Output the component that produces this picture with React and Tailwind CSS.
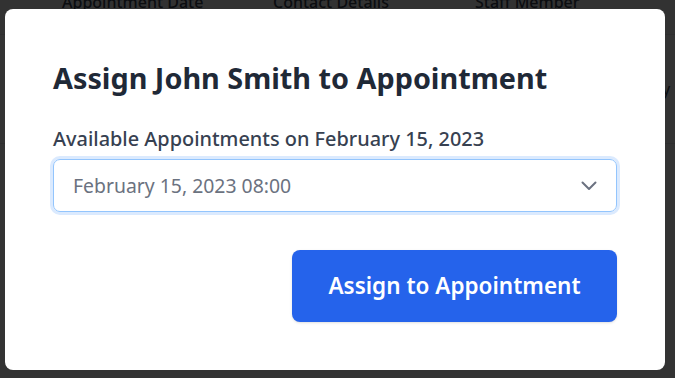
import React from "react";

export default function App() {
  const font = { fontFamily: '"Noto Sans", "Open Sans", sans-serif' };
  return (
    <div className="relative w-[675px] h-[378px] overflow-hidden bg-white" style={font}>
      {/* background table */}
      <div className="-mt-[14px]">
        <div className="flex h-[49px] items-center pb-[16px] bg-gray-50 border-b border-gray-200 text-[16px] text-[#374151] font-medium">
          <div className="w-[62px]" />
          <div className="w-[211px]">Appointment Date</div>
          <div className="w-[202px]">Contact Details</div>
          <div>Staff Member</div>
        </div>
        <div className="flex h-[109px] items-center border-b border-gray-200 text-[16px] text-[#374151]">
          <div className="w-[662px]" />
          <div>y</div>
        </div>
      </div>

      {/* overlay */}
      <div className="absolute inset-0 bg-black/80 flex items-start justify-center pt-[9px] pl-[5px] pr-[10px]">
        <div className="w-[660px] h-[361px] bg-white rounded-lg p-12 flex flex-col">
          <h2 className="mt-[3px] text-[28.8px] leading-[36px] font-bold text-[#1f2937] whitespace-nowrap">
            Assign John Smith to Appointment
          </h2>
          <label className="mt-[31px] text-[19.9px] leading-[24px] font-medium text-[#374151] whitespace-nowrap">
            Available Appointments on February 15, 2023
          </label>
          <div className="mt-[8px] h-[55px] rounded-[7px] ring-[3px] ring-[#dbeafe] border border-[#93c5fd] flex items-center justify-between pl-[19px] pr-[19px]">
            <span className="text-[19.4px] text-[#6b7280] whitespace-nowrap">February 15, 2023 08:00</span>
            <svg width="16" height="10" viewBox="0 0 16 10" fill="none" stroke="#6b7280" strokeWidth="2" strokeLinecap="round" strokeLinejoin="round">
              <path d="M1.5 1.5l6.5 6.5 6.5-6.5" />
            </svg>
          </div>
          <div className="mt-[38px] flex justify-end">
            <button className="w-[325px] h-[72px] rounded-lg bg-[#2563eb] text-white text-[22.5px] font-semibold shadow-sm whitespace-nowrap">
              Assign to Appointment
            </button>
          </div>
        </div>
      </div>
    </div>
  );
}
